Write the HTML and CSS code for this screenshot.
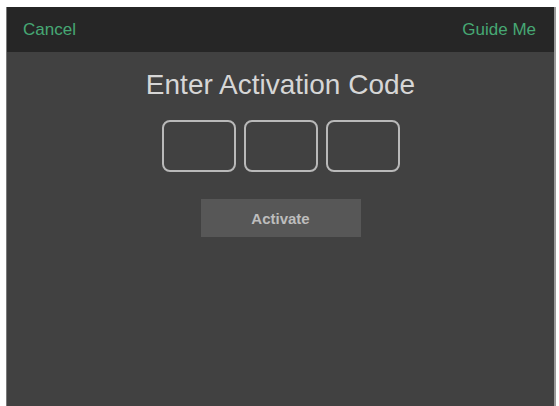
FILE: index.html
```html
<!DOCTYPE html>
<html lang="en">
<head>
    <meta charset="UTF-8">
    <meta name="viewport" content="width=device-width, initial-scale=1.0">
    <title>Enter Activation Code</title>
    <link rel="stylesheet" href="styles.css">
</head>
<body>

<div class="screen">
    <div class="topbar">
        <a class="bar-link" href="#">Cancel</a>
        <a class="bar-link" href="#">Guide Me</a>
    </div>
    <div class="content">
        <h1>Enter Activation Code</h1>
        <div class="code-boxes">
            <input class="code-box" type="text" maxlength="4">
            <input class="code-box" type="text" maxlength="4">
            <input class="code-box" type="text" maxlength="4">
        </div>
        <button type="button" class="activate">Activate</button>
    </div>
</div>

</body>
</html>
```

FILE: styles.css
```css
html, body {
    height: 100%;
}
body {
    font-family: "Liberation Sans", Arial, sans-serif;
    margin: 0;
    background-color: #ffffff;
}
.screen {
    display: flex;
    flex-direction: column;
    box-sizing: border-box;
    height: calc(100% - 7px);
    margin: 7px 3px 0 6px;
    background-color: #414141;
    border-left: 1px solid #7a7a7a;
    border-right: 2px solid #9a9a9a;
}
.topbar {
    display: flex;
    justify-content: space-between;
    align-items: center;
    height: 45px;
    padding: 0 18px 0 16px;
    background-color: #262626;
}
.bar-link {
    color: #46a874;
    font-size: 17px;
    text-decoration: none;
}
.content {
    display: flex;
    flex-direction: column;
    align-items: center;
}
h1 {
    margin: 17px 0 0;
    font-size: 28px;
    font-weight: normal;
    color: #d6d6d6;
}
.code-boxes {
    display: flex;
    gap: 8px;
    margin-top: 19px;
}
.code-box {
    box-sizing: border-box;
    width: 74px;
    height: 52px;
    background: transparent;
    border: 2px solid #b9b9b9;
    border-radius: 8px;
}
.activate {
    margin-top: 27px;
    width: 160px;
    height: 38px;
    border: none;
    background-color: #575757;
    color: #bdbdbd;
    font-family: "Liberation Sans", Arial, sans-serif;
    font-size: 15px;
    font-weight: bold;
}
```
